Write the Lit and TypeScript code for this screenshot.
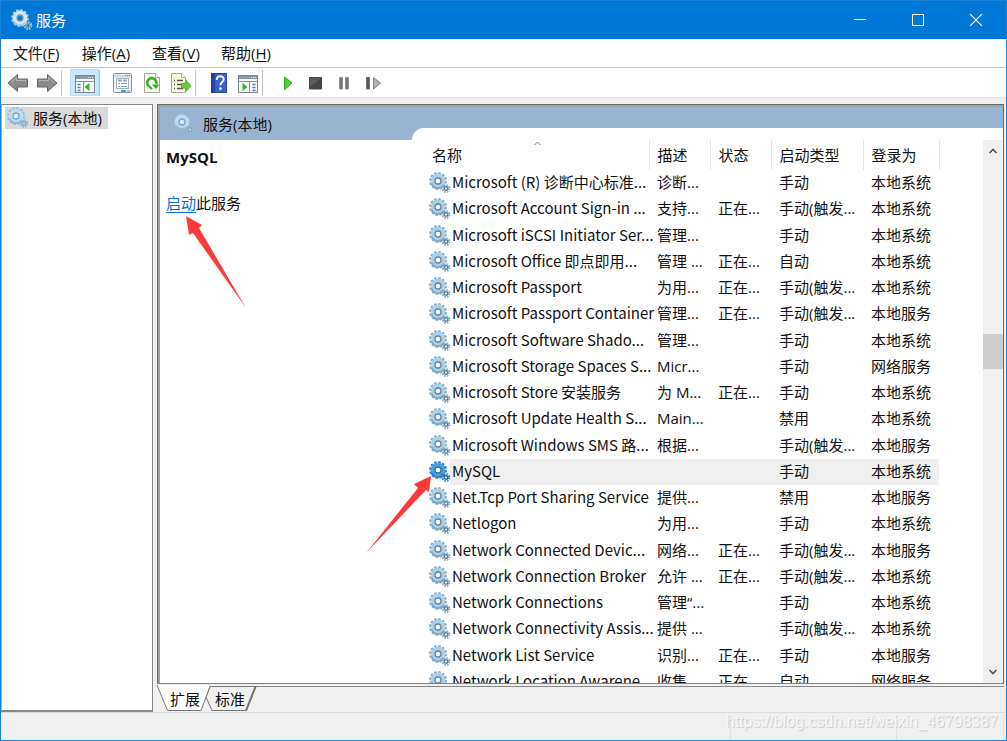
import { LitElement, html, css, svg, nothing } from "lit";
import { customElement, property, state } from "lit/decorators.js";
import { classMap } from "lit/directives/class-map.js";

type Service = [name: string, desc: string, status: string, startup: string, logon: string];

const SYS = "本地系统";
const LOCAL = "本地服务";
const NET = "网络服务";
const RUN = "正在...";
const MAN = "手动";
const TRIG = "手动(触发...";

const SERVICES: Service[] = [
  ["Microsoft (R) 诊断中心标准...", "诊断...", "", MAN, SYS],
  ["Microsoft Account Sign-in ...", "支持...", RUN, TRIG, SYS],
  ["Microsoft iSCSI Initiator Ser...", "管理...", "", MAN, SYS],
  ["Microsoft Office 即点即用...", "管理 ...", RUN, "自动", SYS],
  ["Microsoft Passport", "为用...", RUN, TRIG, SYS],
  ["Microsoft Passport Container", "管理...", RUN, TRIG, LOCAL],
  ["Microsoft Software Shado...", "管理...", "", MAN, SYS],
  ["Microsoft Storage Spaces S...", "Micr...", "", MAN, NET],
  ["Microsoft Store 安装服务", "为 M...", RUN, MAN, SYS],
  ["Microsoft Update Health S...", "Main...", "", "禁用", SYS],
  ["Microsoft Windows SMS 路...", "根据...", "", TRIG, LOCAL],
  ["MySQL", "", "", MAN, SYS],
  ["Net.Tcp Port Sharing Service", "提供...", "", "禁用", LOCAL],
  ["Netlogon", "为用...", "", MAN, SYS],
  ["Network Connected Devic...", "网络...", RUN, TRIG, LOCAL],
  ["Network Connection Broker", "允许 ...", RUN, TRIG, SYS],
  ["Network Connections", "管理“...", "", MAN, SYS],
  ["Network Connectivity Assis...", "提供 ...", "", TRIG, SYS],
  ["Network List Service", "识别...", RUN, MAN, LOCAL],
  ["Network Location Awarene...", "收集...", RUN, "自动", NET],
];

/** Sets the Latin runs of a mixed string in the Latin face. */
const mixed = (text: string) =>
  (text.match(/[\u2e80-\u9fff]+|[^\u2e80-\u9fff]+/g) ?? []).map((run) =>
    /[\u2e80-\u9fff]/.test(run) ? run : html`<span class="latin">${run}</span>`);

@customElement("gear-icon")
class GearIcon extends LitElement {
  @property() tone = "list";

  static styles = css`
    :host { display: block; width: 22px; height: 22px; flex: none; }
    svg { display: block; overflow: visible; }
  `;

  render() {
    const tones: Record<string, string[]> = {
      list: ["#7fa9c6", "#a9d0e8", "#5f84a0", "#fff"],
      selected: ["#2f7fc4", "#45a0e2", "#2a6cae", "#fff"],
      soft: ["#93bad6", "#b7ddf2", "#84a5c0", "#dcebf5"],
      title: ["#a5cce4", "#d0e8f4", "#7c9cb4", "#0078d7"],
    };
    const [edge, body, ring, hole] = tones[this.tone];
    return html`<svg width="22" height="22" viewBox="0 0 22 22" aria-hidden="true">
      <circle cx="10" cy="9" r="7.6" fill="none" stroke=${edge} stroke-width="2.6" stroke-dasharray="2.4 1.58" />
      <circle cx="10" cy="9" r="5.2" fill="none" stroke=${body} stroke-width="4.4" />
      <path d="M3.600 11.600A6.900 6.900 0 0 0 15.500 13.400" fill="none" stroke=${edge} stroke-width="1.800" />
      <circle cx="10" cy="9" r="3" fill=${hole} stroke=${ring} stroke-width="1.3" />
      <circle cx="18" cy="16.500" r="3.2" fill="none" stroke=${edge} stroke-width="2.4" stroke-dasharray="1.500 1.010" />
      <circle cx="18" cy="16.500" r="1.700" fill=${hole} stroke=${ring} stroke-width="1.4" />
    </svg>`;
  }
}

const arrowPath = "M1 11L10.5 2.5V7H20.500V15H10.5V19.500Z";

const icons = {
  back: svg`<path d=${arrowPath} fill="#8c8c8c" stroke="#666" /><path d="M4 10.500L9.500 5.500V8.500H19" fill="none" stroke="#b4b4b4" />`,
  forward: svg`<g transform="translate(22 0) scale(-1 1)"><path d=${arrowPath} fill="#8c8c8c" stroke="#666" /><path d="M4 10.500L9.500 5.500V8.500H19" fill="none" stroke="#b4b4b4" /></g>`,
  tree: svg`<rect x="1.500" y="3.500" width="19" height="17" fill="#f4f6f8" stroke="#7d8794" /><rect x="2" y="4" width="18" height="3" fill="#8f9aa8" /><path d="M14 5.500h5" stroke="#e8eef4" stroke-dasharray="1 1" /><path d="M2 9.500h18M9.500 9v11" stroke="#8b95a1" /><path d="M3.500 12.500h3M3.500 15.500h3M3.500 18.500h3" stroke="#5b83a8" stroke-width="1.400" /><path d="M15.500 11v8L10.500 15z" fill="#43b02a" />`,
  props: svg`<rect x="1.500" y="1.500" width="18" height="19" rx="1" fill="#eef1f5" stroke="#8a939f" /><path d="M2 4h17" stroke="#d2dae3" stroke-width="3" /><path d="M13 3.500h5" stroke="#687585" stroke-dasharray="1 1" /><rect x="4.500" y="6.500" width="12" height="10" fill="#fff" stroke="#a5afbb" /><path d="M6 8.500h4m1 0h4" stroke="#8ba5c0" stroke-width="2" /><path d="M6 11.500h2m1 0h6M6 14.500h2m1 0h6" stroke="#7f9dbb" /><path d="M9 19h5" stroke="#2fa8e0" stroke-width="2" /><path d="M15 19h3" stroke="#b6c0cb" stroke-width="2" />`,
  refresh: svg`<path d="M3.500 1.500h11l4 4v15h-15z" fill="#f6f6ef" stroke="#a5a59b" /><path d="M14.500 1.500v4h4" fill="#fff" stroke="#a5a59b" /><path d="M7.300 14A4.700 4.700 0 1 1 15.400 12" fill="none" stroke="#36ad29" stroke-width="2.600" /><path d="M11 12.500h7.500L15 17z" fill="#36ad29" /><path d="M7 13.500l4 3.500" stroke="#36ad29" stroke-width="2.200" />`,
  export: svg`<path d="M1.500 1.500h10l4 4v15h-14z" fill="#fbf7dc" stroke="#b0a98a" /><path d="M11.500 1.500v4h4" fill="#fff" stroke="#b0a98a" /><path d="M4 8.500h1m2 0h6M4 12.500h1m2 0h5M4 16.500h1m2 0h6" stroke="#55584e" stroke-width="1.300" /><path d="M11.500 11.500h4.500V8l5 6-5 5.500V16h-4.500z" fill="#6acb3d" stroke="#48a828" stroke-width=".8" />`,
  help: svg`<rect x="3" y="1" width="16" height="20" fill="#3c5fc8" /><rect x="3" y="1" width="4" height="20" fill="#2341a0" /><path d="M3.500 1.500h15v19h-15z" fill="none" stroke="#28479e" /><path d="M8.700 8c0-5 7-4.700 7-.8 0 3-3.200 2.800-3.200 6" fill="none" stroke="#f4f7ff" stroke-width="2" /><circle cx="12.400" cy="16.700" r="1.400" fill="#f4f7ff" />`,
  action: svg`<rect x="1.500" y="3.500" width="19" height="17" fill="#f4f6f8" stroke="#7d8794" /><rect x="2" y="4" width="18" height="3" fill="#8f9aa8" /><path d="M14 5.500h5" stroke="#e8eef4" stroke-dasharray="1 1" /><path d="M2 9.500h18M12.500 9v11" stroke="#8b95a1" /><path d="M15.500 12.500h3M15.500 15.500h3M15.500 18.500h3" stroke="#5b83a8" stroke-width="1.400" /><path d="M5.500 11v8L10.500 15z" fill="#43b02a" />`,
  play: svg`<path d="M9.500 5L17 11L9.500 17.500Z" fill="#4fd136" stroke="#2ea41c" />`,
  stop: svg`<rect x="5" y="5" width="13" height="12.500" rx="1" fill="#454545" /><path d="M6 6h11L6 15z" fill="#5c5c5c" />`,
  pause: svg`<path d="M6.500 5.500h3v11.500h-3zM12.500 5.500h3v11.500h-3z" fill="#777" stroke="#8f8f8f" />`,
  resume: svg`<rect x="4.500" y="5.500" width="3" height="11.500" fill="#555" stroke="#777" /><path d="M11.500 5.500L18.500 11L11.500 17Z" fill="#b4b4b4" stroke="#858585" />`,
};

const TOOLS: [keyof typeof icons, string][][] = [
  [["back", "后退"], ["forward", "前进"]],
  [["tree", "显示/隐藏控制台树"]],
  [["props", "属性"], ["refresh", "刷新"], ["export", "导出列表"]],
  [["help", "帮助"], ["action", "显示/隐藏操作窗格"]],
  [["play", "启动服务"], ["stop", "停止服务"], ["pause", "暂停服务"], ["resume", "重启动服务"]],
];

@customElement("app-root")
class AppRoot extends LitElement {
  @state() private selected = 11;

  static styles = css`
    :host {
      display: block;
      font: 15px/20px "Noto Sans CJK SC", "Noto Sans", sans-serif;
      color: #111;
    }
    *, *::before { box-sizing: border-box; }
    .latin { font-family: "Open Sans", "Noto Sans", sans-serif; white-space: pre; }
    button {
      font: inherit; color: inherit; background: none; border: 0; padding: 0; margin: 0;
      display: flex; align-items: center; justify-content: center;
    }
    .window {
      position: relative; height: 100vh; display: flex; flex-direction: column;
      border: 1px solid #1a83d8; background: #f0f0f0; overflow: hidden;
    }
    .titlebar { display: flex; align-items: center; height: 38px; flex: none; background: #0078d7; color: #fff; padding: 0 1px 0 9px; }
    .caption { flex: 1; font: inherit; margin: 0; padding: 0 0 1px 4px; }
    .win-btn { width: 58px; height: 38px; }
    .win-btn svg, .tool svg { display: block; }
    .menubar { display: flex; flex: none; height: 28px; background: #fff; }
    .menu { width: 70px; }
    .menu u { text-underline-offset: 2px; }
    .toolbar { display: flex; flex: none; align-items: center; height: 31px; padding: 1px 0 1px 2px; background: #fff; border-top: 1px solid #bfc7cd; border-bottom: 1px solid #e2e2e2; }
    .group { display: flex; align-items: center; }
    .group:not(:last-child)::after { content: ""; width: 8px; height: 26px; border-left: 1px solid #c4c4c4; }
    .tool { width: 29px; height: 27px; }
    .tool.active { background: #cce8ff; border: 1px solid #b4dcfb; }
    .body { flex: 1; min-height: 0; display: grid; grid-template-columns: 152px 1fr; gap: 4px; padding: 6px 2px 0 0; }
    .tree { background: #fff; border: 1px solid #828790; border-left-color: #a8adb5; border-bottom-width: 2px; padding: 2px 3px; }
    .node { width: 103px; height: 22px; background: #d9d9d9; justify-content: flex-start; padding-left: 1px; }
    .node gear-icon { margin-right: 5px; }
    .right { display: flex; flex-direction: column; min-width: 0; min-height: 0; }
    .pane {
      flex: 1; min-height: 0; display: grid; grid-template-columns: 252px 1fr; background: #99b4d1;
      border: 1px solid #696969; border-bottom-color: #828282; box-shadow: inset 2px 2px #a0a0a0; padding: 2px 0 0 2px;
    }
    .info { background: #fff; display: flex; flex-direction: column; }
    .info-head { display: flex; align-items: center; height: 33px; padding-left: 12px; background: #99b4d1; }
    .info-head gear-icon { margin-right: 9px; }
    .info-body { padding: 7px 6px; }
    h2 { font: inherit; font-weight: 700; margin: 0 0 26px; }
    p { margin: 0; }
    a { color: #0a6fd0; text-underline-offset: 3px; }
    .list { margin-top: 21px; min-height: 0; background: #fff; border-top-left-radius: 12px; padding: 12px 0 0 15px; display: flex; justify-content: space-between; }
    .scroller { overflow: hidden; }
    table { border-collapse: collapse; table-layout: fixed; width: 512px; }
    .c-name { width: 222px; }
    .c-short { width: 61px; }
    .c-type { width: 92px; }
    .c-logon { width: 76px; }
    th, td { padding: 0 0 0 8px; text-align: left; font-weight: 400; white-space: nowrap; }
    td { padding-bottom: 2px; line-height: 20px; }
    th { position: relative; height: 30px; border-right: 1px solid #e5e5e5; }
    th:first-child { padding-left: 5px; }
    .sort { position: absolute; left: 106px; top: 0; }
    tbody tr { height: 26px; }
    tbody tr:nth-child(4n + 3) { height: 27px; }
    td:first-child { padding: 0 0 0 1px; }
    .name { display: flex; align-items: center; height: 26px; }
    .label { flex: 1; height: 26px; padding: 2px 0 0 2px; line-height: 20px; }
    .selected td:not(:first-child), .selected .label { background: #efefef; }
    .scrollbar { display: flex; flex-direction: column; justify-content: space-between; width: 20px; background: #f0f0f0; }
    .scrollbar button { width: 20px; height: 22px; }
    .track { flex: 1; padding-top: 172px; }
    .thumb { height: 35px; background: #cdcdcd; }
    .tabs { position: relative; display: flex; flex: none; height: 28px; padding-left: 10px; }
    .tabs::before { content: ""; position: absolute; left: 53px; right: 0; top: 2px; border-top: 1px solid #8a8a8a; }
    .tabs svg { position: absolute; left: 0; top: 0; }
    .tab { position: relative; width: 36px; height: 28px; padding-top: 1px; }
    .tab + .tab { margin-left: 9px; }
    .status { flex: none; height: 28px; border-top: 1px solid #dcdcdc; display: grid; grid-template-columns: 1fr 166px 107px 2px; padding-top: 2px; }
    .status span { border-right: 1px solid #e0e0e0; }
    .watermark { position: absolute; right: 8px; bottom: 8px; font: 16px/20px "Liberation Sans", sans-serif; color: #f8f8f8; text-shadow: 1px 1px 1px #c4c4c4; }
    .arrow { position: absolute; pointer-events: none; }
    .arrow-link { left: 184px; top: 214px; }
    .arrow-row { left: 362px; top: 474px; }
  `;

  private menu(label: string, key: string) {
    return html`<button class="menu">${label}<span class="latin">(<u>${key}</u>)</span></button>`;
  }

  private row([name, desc, status, startup, logon]: Service, i: number) {
    const on = i === this.selected;
    return html`<tr class=${classMap({ selected: on })} @click=${() => (this.selected = i)}>
      <td><div class="name"><gear-icon tone=${on ? "selected" : "list"}></gear-icon><span class="label">${name}</span></div></td>
      <td>${mixed(desc)}</td><td>${mixed(status)}</td><td>${mixed(startup)}</td><td>${mixed(logon)}</td>
    </tr>`;
  }

  render() {
    return html`<div class="window">
      <header class="titlebar">
        <gear-icon tone="title"></gear-icon>
        <h1 class="caption">服务</h1>
        <button class="win-btn" aria-label="最小化"><svg width="12" height="12"><path d="M0 5.500h12" stroke="#fff" /></svg></button>
        <button class="win-btn" aria-label="最大化"><svg width="12" height="12"><rect x=".5" y=".5" width="11" height="11" fill="none" stroke="#fff" /></svg></button>
        <button class="win-btn" aria-label="关闭"><svg width="12" height="12"><path d="M0 0L12 12M12 0L0 12" stroke="#fff" stroke-width="1.200" /></svg></button>
      </header>
      <nav class="menubar">
        ${this.menu("文件", "F")}${this.menu("操作", "A")}${this.menu("查看", "V")}${this.menu("帮助", "H")}
      </nav>
      <div class="toolbar" role="toolbar">
        ${TOOLS.map((g) => html`<div class="group">${g.map(([id, label]) => html`
          <button class=${classMap({ tool: true, active: id === "tree" })} aria-label=${label}>
            <svg width="22" height="22" viewBox="0 0 22 22">${icons[id]}</svg>
          </button>`)}</div>`)}
      </div>
      <div class="body">
        <aside class="tree"><button class="node"><gear-icon tone="soft"></gear-icon><span>${mixed("服务(本地)")}</span></button></aside>
        <div class="right">
          <main class="pane">
            <section class="info">
              <div class="info-head"><gear-icon tone="soft"></gear-icon><span>${mixed("服务(本地)")}</span></div>
              <div class="info-body">
                <h2>${mixed(SERVICES[this.selected][0])}</h2>
                <p><a href="#start">启动</a>此服务</p>
              </div>
            </section>
            <section class="list">
              <div class="scroller">
                <table>
                  <colgroup><col class="c-name" /><col class="c-short" /><col class="c-short" /><col class="c-type" /><col class="c-logon" /></colgroup>
                  <thead><tr>
                    ${["名称", "描述", "状态", "启动类型", "登录为"].map((h, i) => html`<th scope="col">${h}${i === 0
                      ? html`<svg class="sort" width="9" height="6"><path d="M1.500 5L4.500 2L7.500 5" fill="none" stroke="#777" /></svg>`
                      : nothing}</th>`)}
                  </tr></thead>
                  <tbody>${SERVICES.map((s, i) => this.row(s, i))}</tbody>
                </table>
              </div>
              <div class="scrollbar">
                <button aria-label="向上滚动"><svg width="10" height="8"><path d="M1.500 6L5 2.500L8.500 6" fill="none" stroke="#555" stroke-width="1.600" /></svg></button>
                <div class="track"><div class="thumb"></div></div>
                <button aria-label="向下滚动"><svg width="10" height="8"><path d="M1.500 2L5 5.500L8.500 2" fill="none" stroke="#555" stroke-width="1.600" /></svg></button>
              </div>
            </section>
          </main>
          <div class="tabs" role="tablist">
            <svg width="110" height="28" aria-hidden="true">
              <path d="M53 2.500H99L89.500 26.500H55L49 13z" fill="#f0f0f0" stroke="#777" />
              <path d="M98.500 2.500L89 26.500" stroke="#777" stroke-width="2" />
              <path d="M0 1H53L44 26.500H10.500z" fill="#fff" />
              <path d="M0 1L10.500 26.500H44L53 2.500" fill="none" stroke="#777" />
            </svg>
            <button class="tab" role="tab" aria-selected="true">扩展</button>
            <button class="tab" role="tab" aria-selected="false">标准</button>
          </div>
        </div>
      </div>
      <footer class="status"><span></span><span></span><span></span></footer>
      <div class="watermark">https://blog.csdn.net/weixin_46798387</div>
      <svg class="arrow arrow-link" width="64" height="96" aria-hidden="true"><path d="M1 1L17 10L14 13L61 93L8 18L4 20Z" fill="#fd3b3b" /></svg>
      <svg class="arrow arrow-row" width="70" height="80" aria-hidden="true"><path d="M68 1L51 9L55 13L3 78L63 15L66 17Z" fill="#fd3b3b" /></svg>
    </div>`;
  }
}
